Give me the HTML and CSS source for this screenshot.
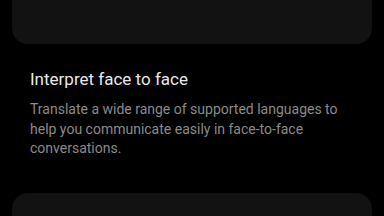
FILE: index.html
```html
<!DOCTYPE html>
<html>
<head>
<meta charset="utf-8">
<link rel="stylesheet" href="styles.css">
</head>
<body>
<div class="page">
  <div class="card card-top"></div>
  <section class="info">
    <h2 class="title">Interpret face to face</h2>
    <p class="desc">Translate a wide range of supported languages to help you communicate easily in face-to-face conversations.</p>
  </section>
  <div class="card card-bottom"></div>
</div>
</body>
</html>
```
FILE: styles.css
```css
html, body {
  margin: 0;
  padding: 0;
  background: #000;
  width: 384px;
  height: 216px;
  overflow: hidden;
}
.page {
  display: flex;
  flex-direction: column;
  padding: 0 12px;
  font-family: Roboto, "Noto Sans", sans-serif;
}
.card {
  background: #121212;
  border-radius: 16px;
  flex: none;
}
.card-top {
  margin-top: -60px;
  height: 104px;
}
.info {
  padding: 24px 18px 0 18px;
}
.title {
  margin: 0;
  font-size: 17px;
  font-weight: 400;
  line-height: 22px;
  color: #e8e8e8;
}
.desc {
  margin: 10px 0 0 0;
  font-size: 14px;
  line-height: 19.5px;
  color: #8a8a8a;
  max-width: 320px;
}
.card-bottom {
  margin-top: 34px;
  height: 80px;
}
```
